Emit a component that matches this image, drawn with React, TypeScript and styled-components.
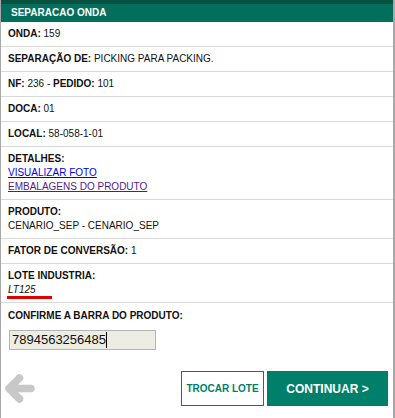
import React from "react";
import styled, { createGlobalStyle } from "styled-components";

const Global = createGlobalStyle`
  html, body { margin: 0; padding: 0; background: #fff; }
  body { font-family: "Liberation Sans", Arial, sans-serif; color: #111; }
`;

const Page = styled.div`
  width: 395px;
  height: 418px;
  box-sizing: border-box;
  border-left: 1px solid #a8a8a8;
  border-right: 2px solid #a8a8a8;
  display: flex;
  flex-direction: column;
  overflow: hidden;
`;

const Header = styled.div`
  height: 18px;
  border-top: 4px solid #08503f;
  background: #036e5b;
  color: #fff;
  font-weight: bold;
  font-size: 10px;
  line-height: 18px;
  padding-left: 11px;
  margin-left: -1px;
  margin-right: -1px;
`;

const Row = styled.div`
  padding: 5px 7px;
  border-bottom: 1px solid #d8d8d8;
  font-size: 10px;
  line-height: 14px;
`;

const Label = styled.b`
  font-weight: bold;
`;

const Line = styled.div`
  line-height: 14px;
`;

const Link = styled.a<{ $visited?: boolean }>`
  display: block;
  color: ${(p) => (p.$visited ? "#551a8b" : "#0000ee")};
  text-decoration: underline;
  line-height: 14px;
  cursor: pointer;
`;

const Lote = styled.span`
  display: inline-block;
  width: 44px;
  font-style: italic;
  line-height: 13px;
  border-bottom: 3px solid #e00000;
  margin-bottom: -2px;
  margin-left: -1px;
  padding-left: 1px;
`;

const ConfirmBox = styled.div`
  padding: 6px 7px 0 7px;
  font-size: 10px;
  line-height: 14px;
`;

const Input = styled.div`
  box-sizing: border-box;
  margin: 7px 0 0 1px;
  width: 147px;
  height: 20px;
  border: 1px solid #b4b4b4;
  background: #eeede4;
  font-size: 13px;
  line-height: 18px;
  padding-left: 2px;
  color: #111;
  display: flex;
  align-items: center;
`;

const Caret = styled.span`
  display: inline-block;
  width: 1px;
  height: 16px;
  background: #000;
`;

const Footer = styled.div`
  display: flex;
  align-items: center;
  justify-content: space-between;
  padding: 21px 5px 0 3px;
`;

const Buttons = styled.div`
  display: flex;
  gap: 3px;
`;

const OutlineButton = styled.button`
  width: 83px;
  height: 35px;
  box-sizing: border-box;
  border: 1px solid #00806b;
  background: #fff;
  color: #00806b;
  font-family: "Liberation Sans", Arial, sans-serif;
  font-weight: bold;
  font-size: 10px;
  padding: 0;
`;

const PrimaryButton = styled.button`
  width: 121px;
  height: 35px;
  border: none;
  background: #00806b;
  color: #fff;
  font-family: "Liberation Sans", Arial, sans-serif;
  font-weight: bold;
  font-size: 12px;
  padding: 0;
`;

const BackArrow = () => (
  <svg width="31" height="33" viewBox="0 0 31 33">
    <path
      d="M5 16.5 H27 M5 16.5 L15.5 6 M5 16.5 L15.5 27"
      stroke="#c8c8c8"
      strokeWidth="7.5"
      strokeLinecap="round"
      strokeLinejoin="round"
      fill="none"
    />
  </svg>
);

export default function App() {
  return (
    <>
      <Global />
      <Page>
        <Header>SEPARACAO ONDA</Header>
        <Row>
          <Label>ONDA:</Label> 159
        </Row>
        <Row>
          <Label>SEPARAÇÃO DE:</Label> PICKING PARA PACKING.
        </Row>
        <Row>
          <Label>NF:</Label> 236 - <Label>PEDIDO:</Label> 101
        </Row>
        <Row>
          <Label>DOCA:</Label> 01
        </Row>
        <Row>
          <Label>LOCAL:</Label> 58-058-1-01
        </Row>
        <Row>
          <Line>
            <Label>DETALHES:</Label>
          </Line>
          <Link>VISUALIZAR FOTO</Link>
          <Link $visited>EMBALAGENS DO PRODUTO</Link>
        </Row>
        <Row>
          <Line>
            <Label>PRODUTO:</Label>
          </Line>
          <Line>CENARIO_SEP - CENARIO_SEP</Line>
        </Row>
        <Row>
          <Label>FATOR DE CONVERSÃO:</Label> 1
        </Row>
        <Row>
          <Line>
            <Label>LOTE INDUSTRIA:</Label>
          </Line>
          <Line>
            <Lote>LT125</Lote>
          </Line>
        </Row>
        <ConfirmBox>
          <Label>CONFIRME A BARRA DO PRODUTO:</Label>
          <Input>
            7894563256485
            <Caret />
          </Input>
        </ConfirmBox>
        <Footer>
          <BackArrow />
          <Buttons>
            <OutlineButton>TROCAR LOTE</OutlineButton>
            <PrimaryButton>CONTINUAR &gt;</PrimaryButton>
          </Buttons>
        </Footer>
      </Page>
    </>
  );
}
